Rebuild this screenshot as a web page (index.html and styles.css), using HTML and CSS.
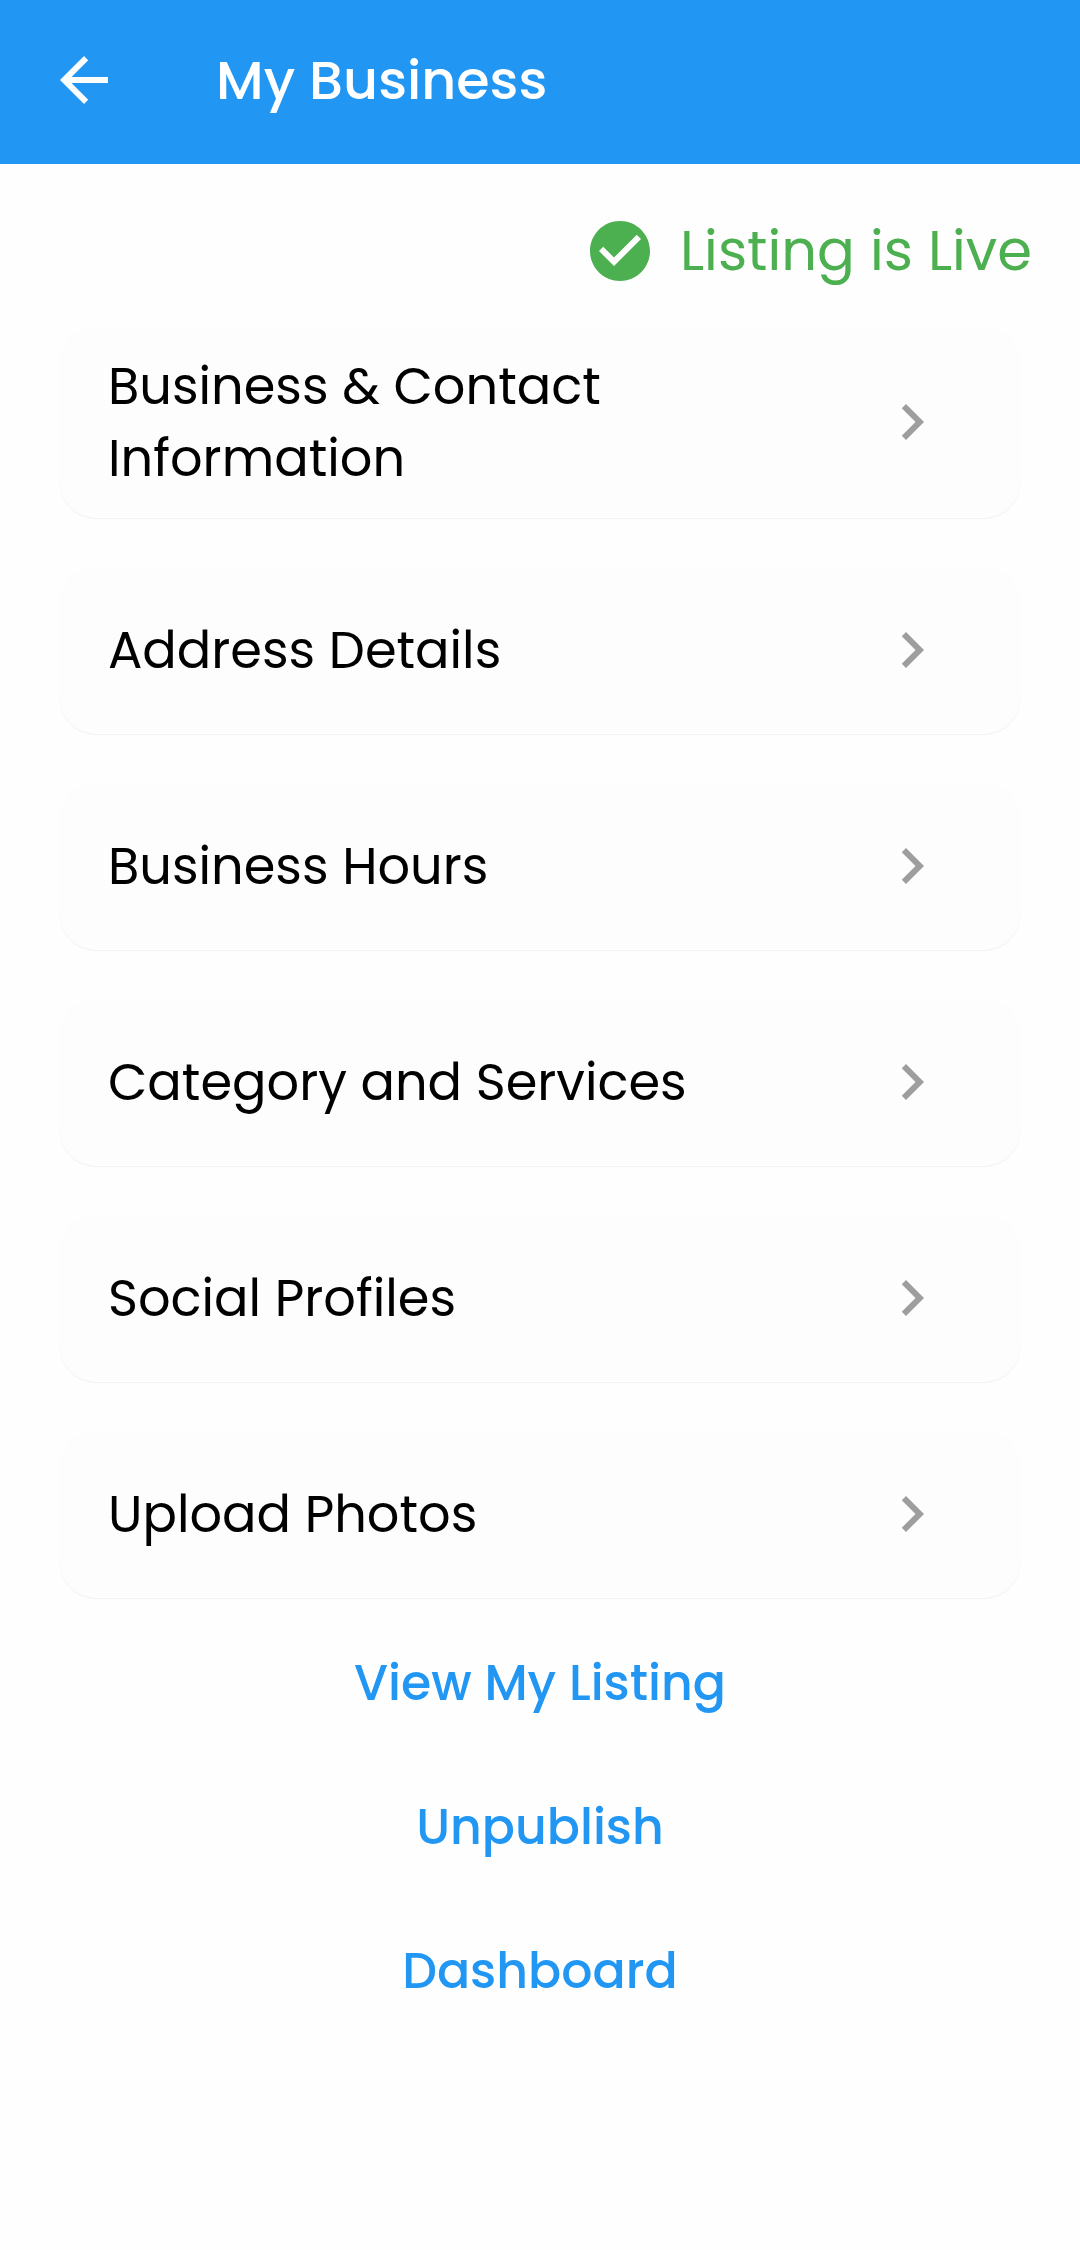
FILE: index.html
```html
<!DOCTYPE html>
<html lang="en">
<head>
<meta charset="utf-8">
<meta name="viewport" content="width=device-width, initial-scale=1">
<title>My Business</title>
<link rel="stylesheet" href="styles.css">
</head>
<body>
<header class="app-bar">
  <button class="back" type="button" aria-label="Back">
    <svg class="icon" viewBox="0 0 24 24" aria-hidden="true"><path d="M20 11H7.83l5.59-5.59L12 4l-8 8 8 8 1.41-1.41L7.83 13H20v-2z"/></svg>
  </button>
  <h1 class="title">My Business</h1>
</header>
<main>
  <p class="status">
    <svg class="icon" viewBox="0 0 24 24" aria-hidden="true"><path d="M12 2C6.48 2 2 6.48 2 12s4.480 10 10 10 10-4.480 10-10S17.520 2 12 2zm-2 15l-5-5 1.410-1.410L10 14.170l7.590-7.590L19 8l-9 9z"/></svg>
    <span>Listing is Live</span>
  </p>
  <nav class="sections" aria-label="Business sections">
    <a class="card" href="#contact"><span class="label">Business &amp; Contact Information</span><svg class="icon chevron" viewBox="0 0 24 24" aria-hidden="true"><path d="M10 6L8.590 7.410 13.170 12l-4.580 4.590L10 18l6-6z"/></svg></a>
    <a class="card" href="#address"><span class="label">Address Details</span><svg class="icon chevron" viewBox="0 0 24 24" aria-hidden="true"><path d="M10 6L8.590 7.410 13.170 12l-4.580 4.590L10 18l6-6z"/></svg></a>
    <a class="card" href="#hours"><span class="label">Business Hours</span><svg class="icon chevron" viewBox="0 0 24 24" aria-hidden="true"><path d="M10 6L8.590 7.410 13.170 12l-4.580 4.590L10 18l6-6z"/></svg></a>
    <a class="card" href="#services"><span class="label">Category and Services</span><svg class="icon chevron" viewBox="0 0 24 24" aria-hidden="true"><path d="M10 6L8.590 7.410 13.170 12l-4.580 4.590L10 18l6-6z"/></svg></a>
    <a class="card" href="#social"><span class="label">Social Profiles</span><svg class="icon chevron" viewBox="0 0 24 24" aria-hidden="true"><path d="M10 6L8.590 7.410 13.170 12l-4.580 4.590L10 18l6-6z"/></svg></a>
    <a class="card" href="#photos"><span class="label">Upload Photos</span><svg class="icon chevron" viewBox="0 0 24 24" aria-hidden="true"><path d="M10 6L8.590 7.410 13.170 12l-4.580 4.590L10 18l6-6z"/></svg></a>
  </nav>
  <div class="actions">
    <button class="action" type="button">View My Listing</button>
    <button class="action" type="button">Unpublish</button>
    <button class="action" type="button">Dashboard</button>
  </div>
</main>
</body>
</html>
```
FILE: styles.css
```css
* {
  box-sizing: border-box;
}

body {
  margin: 0;
  min-height: 100vh;
  background: #fefefe;
  color: #000;
  font-family: Poppins, Inter, "Open Sans", sans-serif;
  font-size: 51px;
  line-height: 72px;
}

button {
  border: 0;
  padding: 0;
  background: none;
  color: inherit;
  font: inherit;
  cursor: pointer;
}

.icon {
  display: block;
  flex: none;
  width: 72px;
  height: 72px;
  fill: currentColor;
}

.app-bar {
  display: flex;
  align-items: center;
  gap: 96px;
  padding: 44px 48px 48px;
  background: #2196f3;
  color: #fff;
}

.title {
  margin: 0;
  font-size: 54px;
  font-weight: 500;
}

.status {
  display: flex;
  justify-content: flex-end;
  align-items: center;
  gap: 24px;
  margin: 0;
  padding: 51px 48px 39px;
  color: #4caf50;
  font-size: 56px;
}

.sections {
  display: flex;
  flex-direction: column;
  gap: 48px;
  padding: 0 60px;
}

.card {
  display: flex;
  align-items: center;
  justify-content: space-between;
  gap: 48px;
  min-height: 168px;
  padding: 24px 72px 24px 48px;
  border-radius: 36px;
  background: #fdfdfd;
  box-shadow: 0 1px 1px rgba(0, 0, 0, 0.06);
  color: inherit;
  text-decoration: none;
}

.chevron {
  color: #9e9e9e;
}

.actions {
  display: flex;
  flex-direction: column;
  align-items: center;
  padding: 13px 60px;
}

.action {
  padding: 36px 24px;
  color: #2196f3;
  font-size: 49px;
  font-weight: 500;
}
```
